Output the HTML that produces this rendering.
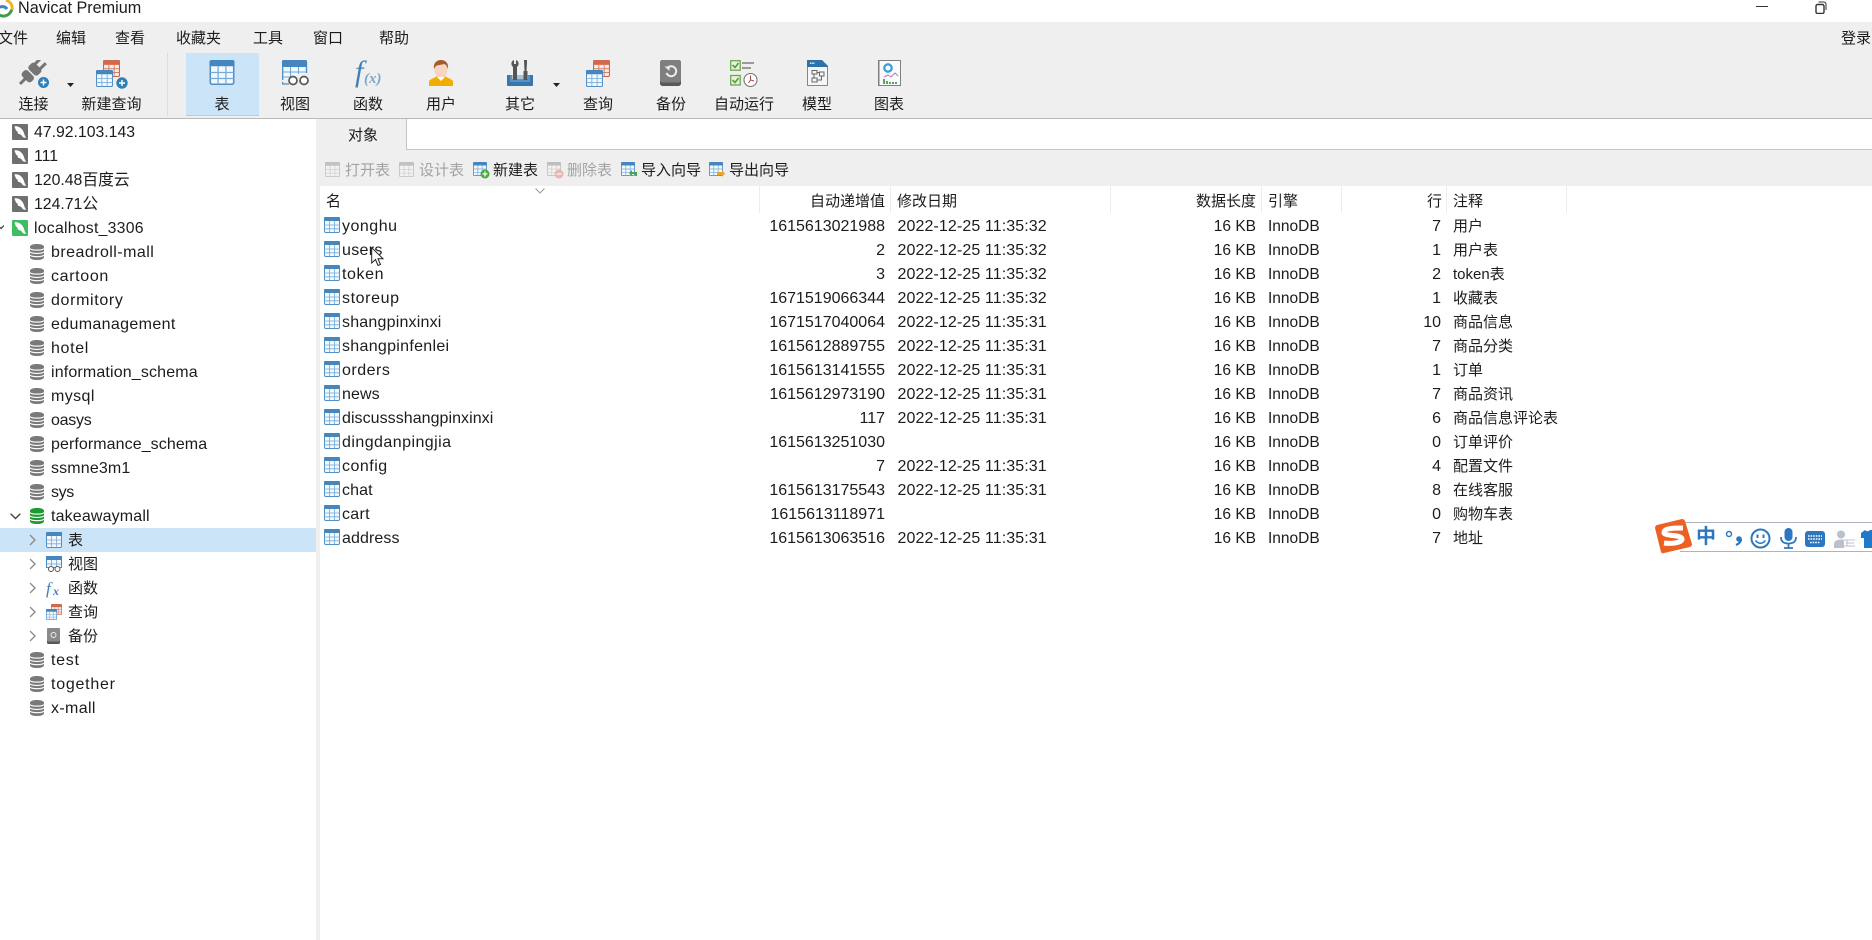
<!DOCTYPE html>
<html lang="zh"><head><meta charset="utf-8"><title>Navicat Premium</title>
<style>
html,body{margin:0;padding:0;background:#fff}
body{width:1872px;height:940px;position:relative;overflow:hidden;font-family:"Liberation Sans","Noto Sans CJK SC",sans-serif;color:#1c1c1c;font-size:15px}
.a{position:absolute;white-space:nowrap}
.l{position:absolute;white-space:nowrap;top:93px;height:24px;line-height:24px;transform:translateX(-50%);font-size:15px}
.m{position:absolute;top:27px;line-height:24px;font-size:15px;white-space:nowrap}
.i{position:absolute}
.s{position:absolute;top:159px;line-height:24px;font-size:15px;white-space:nowrap}
.d{color:#a3a3a3}
.h{position:absolute;top:190px;line-height:24px;font-size:15px;white-space:nowrap}
.sep{position:absolute;top:186px;height:27px;width:1px;background:#ececec}
#tree{position:absolute;left:0;top:120px;width:316px}
#tree div{height:24px;line-height:24px;position:relative;white-space:nowrap;font-size:16px}
#tree svg{position:absolute}
#tree span{color:#1c1c1c;top:1px}
#tree .sv span{position:absolute;left:34px;font-size:15.8px}
#tree .sv svg{left:12px;top:4px}
#tree .db span{position:absolute;left:51px;letter-spacing:.15px}
#tree .db svg{left:30px;top:4px}
#tree .su span{position:absolute;left:68px;font-size:15px}
#tree .su svg.ic{left:46px;top:4px}
#tree .su svg.ch{left:29px;top:6px}
#tree .sel{background:#cce4f8}
#rows{position:absolute;left:320px;top:214px;width:1300px}
.r{height:24px;line-height:24px;position:relative;white-space:nowrap;font-size:16px}
.r svg{position:absolute;left:4px;top:3px}
.r span{position:absolute;top:1px}
.n{left:22px;letter-spacing:.1px}
.u{left:405px;width:160px;text-align:right}
.t{left:577.5px;letter-spacing:.1px}
.z{left:836px;width:100px;text-align:right;font-size:15.5px}
.e{left:948px;font-size:15.5px}
.w{left:1021px;width:100px;text-align:right}
.c{left:1133px;font-size:15px}
</style></head><body>
<svg width="0" height="0" style="position:absolute">
<defs>
<symbol id="tbl" viewBox="0 0 16 16"><rect x=".5" y=".5" width="15" height="15" rx="1.2" fill="#f2f8fd" stroke="#4f90c8"/><rect x="0" y="0" width="16" height="4" rx="1.2" fill="#4586bf"/><path d="M5.5 4V15.5M10.5 4V15.5M.5 8H15.5M.5 11.8H15.5" stroke="#74abda" stroke-width=".8" fill="none"/></symbol>
<symbol id="sv" viewBox="0 0 16 16"><rect width="16" height="16" rx="1" fill="currentColor"/><path d="M2.5 2.5C5 1.8 8 3 10 5.3 11.6 7.2 12.2 9.8 12.7 11.3L14.2 14 10.9 13.2C10 11.2 8.2 10 6 9.6L5.4 7.6 3.9 6.4Z" fill="#fff"/></symbol>
<symbol id="dbi" viewBox="0 0 14 16"><path d="M0 3C0 1 3 0 7 0S14 1 14 3V13C14 15 11 16 7 16S0 15 0 13Z" fill="currentColor"/><path d="M0 4.6C2 6.6 12 6.6 14 4.6M0 7.9C2 9.9 12 9.9 14 7.9M0 11.2C2 13.2 12 13.2 14 11.2" stroke="#fff" stroke-width="1.1" fill="none"/></symbol>
<symbol id="rd" viewBox="0 0 16 16"><rect x=".5" y=".5" width="15" height="15" rx="1.2" fill="#f8ece8" stroke="#c9634a"/><rect width="16" height="4.6" rx="1.2" fill="#cf6a50"/><path d="M5.5 4.5V15.5M10.5 4.5V15.5M.5 8.2H15.5M.5 11.8H15.5" stroke="#d47e66" stroke-width=".9" fill="none"/></symbol>
</defs></svg>

<!-- title bar -->
<svg class="i" style="left:0;top:0" width="14" height="18" viewBox="0 0 14 18"><path d="M-2 14C3 18 10 16 12 9" stroke="#3f9d4a" stroke-width="3" fill="none"/><path d="M6 0C11 2 13 6 12 10" stroke="#f0b429" stroke-width="3" fill="none"/><path d="M-2 8C1 6 5 6 7 9" stroke="#3f80c8" stroke-width="3" fill="none"/></svg>
<div class="a" style="left:18px;top:-3px;line-height:22px;font-size:16.2px">Navicat Premium</div>
<div class="a" style="left:1756px;top:6px;width:12px;height:1px;background:#333"></div>
<svg class="i" style="left:1815px;top:1px" width="12" height="13" viewBox="0 0 12 13"><rect x="1" y="3.5" width="8" height="9" rx="1.5" fill="none" stroke="#333" stroke-width="1.4"/><path d="M3.5 1H8.5C10 1 11 2 11 3.5V9" fill="none" stroke="#333"/></svg>

<!-- menu+toolbar bg -->
<div class="a" style="left:0;top:22px;width:1872px;height:96px;background:#efefef"></div>
<div class="a" style="left:0;top:118px;width:1872px;height:1px;background:#b9b9b9"></div>
<div class="m" style="left:-2px">文件</div><div class="m" style="left:56px">编辑</div><div class="m" style="left:115px">查看</div><div class="m" style="left:176px">收藏夹</div><div class="m" style="left:253px">工具</div><div class="m" style="left:313px">窗口</div><div class="m" style="left:379px">帮助</div><div class="m" style="left:1841px">登录</div>

<div class="a" style="left:167px;top:53px;width:1px;height:63px;background:#dcdcdc"></div>
<div class="a" style="left:186px;top:53px;width:73px;height:63px;background:#cce4f8;border-bottom:1px solid #b5d0e6;box-sizing:border-box"></div>

<!-- toolbar icons -->
<svg class="i" style="left:19px;top:60px" width="32" height="30" viewBox="0 0 32 30"><g transform="translate(1 24) rotate(-45)" fill="#757575"><rect x="0" y="-1.5" width="8" height="3"/><rect x="7" y="-6.5" width="8" height="13" rx="3"/><rect x="16.5" y="-6.5" width="9" height="13" rx="3"/><rect x="25" y="-5" width="8" height="3"/><rect x="25" y="2" width="8" height="3"/></g><circle cx="24.5" cy="22.5" r="5.5" fill="#2f7fb9"/><path d="M21.5 22.5H27.5M24.5 19.5V25.5" stroke="#fff" stroke-width="1.5"/></svg>
<svg class="i" style="left:67px;top:83px" width="7" height="4"><path d="M0 0H7L3.5 4Z" fill="#222"/></svg>
<svg class="i" style="left:103px;top:60px" width="17" height="17"><use href="#rd"/></svg>
<svg class="i" style="left:96px;top:70px" width="17" height="17"><use href="#tbl"/></svg>
<svg class="i" style="left:116px;top:77px" width="12" height="12"><circle cx="6" cy="6" r="5.7" fill="#2f7fb9"/><path d="M3 6H9M6 3V9" stroke="#fff" stroke-width="1.4"/></svg>
<svg class="i" style="left:209px;top:60px" width="26" height="25"><use href="#tbl"/></svg>
<svg class="i" style="left:282px;top:60px" width="28" height="26" viewBox="0 0 28 26"><path d="M.7 20V2.5Q.7.7 2.5.7H23Q24.5.7 24.5 2.5V13M.7 22V24H7" fill="#f2f8fd" stroke="#4a8cc4" stroke-width="1.3"/><rect width="25" height="7" rx="1.5" fill="#4586bf"/><path d="M8.5 7V18M16.5 7V14M1 12H24M1 17H8" stroke="#6aa5d8"/><circle cx="11" cy="20.5" r="4" fill="#fff" stroke="#555" stroke-width="1.7"/><circle cx="22" cy="20.5" r="4" fill="#fff" stroke="#555" stroke-width="1.7"/></svg>
<svg class="i" style="left:352px;top:56px" width="34" height="34" viewBox="0 0 34 34"><text x="3" y="25" font-family="Liberation Serif,serif" font-style="italic" font-size="30" fill="#3f80ba">f</text><text x="12" y="27" font-family="Liberation Serif,serif" font-style="italic" font-size="15" font-weight="bold" fill="#7aa7cf">(x)</text></svg>
<svg class="i" style="left:429px;top:60px" width="24" height="26" viewBox="0 0 24 26"><path d="M0 26V21C3 18 6 18 8 16H16C18 18 21 18 24 21V26Z" fill="#f2ae00"/><ellipse cx="12" cy="9.5" rx="6.5" ry="8.5" fill="#f7d5c0"/><path d="M5 9C4 2 9 0 12 0S20 2 19 9C18 6 17 4.5 15 4 12 5 8 5 7 6 6 7 5.5 8 5 9Z" fill="#a65a2e"/><path d="M8 17L12 21 16 17Z" fill="#fff"/></svg>
<svg class="i" style="left:507px;top:60px" width="26" height="26" viewBox="0 0 26 26"><path d="M0 15H5L5 19H21V15H26V25Q26 26 25 26H1Q0 26 0 25Z" fill="#3777ae"/><path d="M3 15V22H23V15" fill="#6fa6d4" opacity=".6"/><path d="M7 0V4H9V0C12 1 12.5 5 10 7V20H6V7C3.5 5 4 1 7 0Z" fill="#555"/><path d="M17 0H20V3L19.5 11H20.5V20H16.5V11H17.5Z" fill="#555"/></svg>
<svg class="i" style="left:553px;top:83px" width="7" height="4"><path d="M0 0H7L3.5 4Z" fill="#222"/></svg>
<svg class="i" style="left:593px;top:60px" width="17" height="17"><use href="#rd"/></svg>
<svg class="i" style="left:586px;top:70px" width="17" height="17"><use href="#tbl"/></svg>
<svg class="i" style="left:660px;top:60px" width="21" height="26" viewBox="0 0 21 26"><rect width="21" height="26" rx="2.5" fill="#595959"/><rect width="21" height="22.5" rx="2.5" fill="#7f7f7f"/><path d="M7 8.5A5 5 0 1 1 6.5 13" fill="none" stroke="#eee" stroke-width="2"/><path d="M4.5 6.5H9.5V11Z" fill="#eee"/></svg>
<svg class="i" style="left:730px;top:60px" width="28" height="27" viewBox="0 0 28 27"><rect x=".7" y=".7" width="9.5" height="9.5" fill="#e8f3df" stroke="#6aa84f" stroke-width="1.3"/><path d="M2.5 5L5 7.5 8.5 3" stroke="#5c9e3a" stroke-width="1.7" fill="none"/><rect x=".7" y="15.5" width="9.5" height="9.5" fill="#e8f3df" stroke="#6aa84f" stroke-width="1.3"/><path d="M2.5 20L5 22.5 8.5 18" stroke="#5c9e3a" stroke-width="1.7" fill="none"/><path d="M12 3H24M12 8H21" stroke="#9a9a9a" stroke-width="2"/><circle cx="20.5" cy="20" r="6.5" fill="#fff" stroke="#777" stroke-width="1.1"/><path d="M20.5 15.5V20L24 21M20.5 20L18.5 23" stroke="#a04a4a" fill="none"/></svg>
<svg class="i" style="left:807px;top:60px" width="21" height="26" viewBox="0 0 21 26"><path d="M.5 6H20.5V25.5H.5Z" fill="#f4f6f8" stroke="#6f8ba5"/><path d="M0 0H15L21 6V7H0Z" fill="#3071a8"/><path d="M3 3.2H8" stroke="#fff" stroke-width="1.4" stroke-dasharray="1.5 .8"/><path d="M5 10.5H10V14H5ZM12.5 12H17V16H12.5ZM5 18H10V22H5ZM10 12.5H12.5M7 14V18M14.5 16V20H10" fill="none" stroke="#666"/></svg>
<svg class="i" style="left:878px;top:60px" width="23" height="26" viewBox="0 0 23 26"><rect x=".5" y=".5" width="22" height="25" fill="#fbfbfb" stroke="#808080"/><path d="M1.5 1V25" stroke="#bbb"/><circle cx="10" cy="8" r="3.7" fill="none" stroke="#3aa0d8" stroke-width="2.3"/><path d="M6 17L10 15 13 17 17 13 20 16" fill="none" stroke="#b678c8"/><path d="M6 24V19M9 24V21M12 24V22M15 24V22M18 24V22" stroke="#3f9d4a" stroke-width="1.8"/></svg>

<div class="l" style="left:33.5px">连接</div><div class="l" style="left:111.5px">新建查询</div><div class="l" style="left:222px">表</div><div class="l" style="left:295px">视图</div><div class="l" style="left:368px">函数</div><div class="l" style="left:441px">用户</div><div class="l" style="left:520px">其它</div><div class="l" style="left:598px">查询</div><div class="l" style="left:671px">备份</div><div class="l" style="left:744px">自动运行</div><div class="l" style="left:817px">模型</div><div class="l" style="left:889px">图表</div>

<!-- tree -->
<div id="tree">
<div class="sv" style="color:#6f6f6f"><svg width="16" height="16"><use href="#sv"/></svg><span>47.92.103.143</span></div>
<div class="sv" style="color:#6f6f6f"><svg width="16" height="16"><use href="#sv"/></svg><span>111</span></div>
<div class="sv" style="color:#6f6f6f"><svg width="16" height="16"><use href="#sv"/></svg><span>120.48百度云</span></div>
<div class="sv" style="color:#6f6f6f"><svg width="16" height="16"><use href="#sv"/></svg><span>124.71公</span></div>
<div class="sv" style="color:#3cbf62"><svg style="left:-2px;top:9px" width="6" height="5"><path d="M0 .5L3 3.5 6 .5" fill="none" stroke="#444" stroke-width="1.3"/></svg><svg width="16" height="16"><use href="#sv"/></svg><span style="letter-spacing:.25px">localhost_3306</span></div>
<div class="db" style="color:#7a7a7a"><svg width="14" height="16"><use href="#dbi"/></svg><span style="letter-spacing:.45px">breadroll-mall</span></div>
<div class="db" style="color:#7a7a7a"><svg width="14" height="16"><use href="#dbi"/></svg><span style="letter-spacing:.65px">cartoon</span></div>
<div class="db" style="color:#7a7a7a"><svg width="14" height="16"><use href="#dbi"/></svg><span style="letter-spacing:.65px">dormitory</span></div>
<div class="db" style="color:#7a7a7a"><svg width="14" height="16"><use href="#dbi"/></svg><span style="letter-spacing:.35px">edumanagement</span></div>
<div class="db" style="color:#7a7a7a"><svg width="14" height="16"><use href="#dbi"/></svg><span style="letter-spacing:.65px">hotel</span></div>
<div class="db" style="color:#7a7a7a"><svg width="14" height="16"><use href="#dbi"/></svg><span>information_schema</span></div>
<div class="db" style="color:#7a7a7a"><svg width="14" height="16"><use href="#dbi"/></svg><span style="letter-spacing:.4px">mysql</span></div>
<div class="db" style="color:#7a7a7a"><svg width="14" height="16"><use href="#dbi"/></svg><span style="letter-spacing:-.25px">oasys</span></div>
<div class="db" style="color:#7a7a7a"><svg width="14" height="16"><use href="#dbi"/></svg><span style="letter-spacing:.08px">performance_schema</span></div>
<div class="db" style="color:#7a7a7a"><svg width="14" height="16"><use href="#dbi"/></svg><span>ssmne3m1</span></div>
<div class="db" style="color:#7a7a7a"><svg width="14" height="16"><use href="#dbi"/></svg><span style="letter-spacing:-.4px">sys</span></div>
<div class="db" style="color:#1f9a2e"><svg style="left:10px;top:9px" width="11" height="7"><path d="M.7.7L5.5 5.5 10.3.7" fill="none" stroke="#444" stroke-width="1.4"/></svg><svg width="14" height="16"><use href="#dbi"/></svg><span>takeawaymall</span></div>
<div class="su sel"><svg class="ch" width="7" height="12"><path d="M1 1L6 6 1 11" fill="none" stroke="#8a8a8a" stroke-width="1.3"/></svg><svg class="ic" width="16" height="16"><use href="#tbl"/></svg><span>表</span></div>
<div class="su"><svg class="ch" width="7" height="12"><path d="M1 1L6 6 1 11" fill="none" stroke="#8a8a8a" stroke-width="1.3"/></svg><svg class="ic" width="16" height="16" viewBox="0 0 16 16"><rect x=".5" y=".5" width="15" height="11" fill="#f2f8fd" stroke="#4a8cc4"/><rect width="16" height="4" fill="#4586bf"/><path d="M5.5 4V11M10.5 4V11M1 8H15" stroke="#6aa5d8" stroke-width=".8"/><circle cx="5" cy="13" r="2.5" fill="#fff" stroke="#555"/><circle cx="11.5" cy="13" r="2.5" fill="#fff" stroke="#555"/></svg><span>视图</span></div>
<div class="su"><svg class="ch" width="7" height="12"><path d="M1 1L6 6 1 11" fill="none" stroke="#8a8a8a" stroke-width="1.3"/></svg><svg class="ic" width="17" height="18" viewBox="0 0 17 18"><text x="0" y="14" font-family="Liberation Serif,serif" font-style="italic" font-size="17" fill="#3f80ba">f</text><text x="7" y="15" font-family="Liberation Serif,serif" font-style="italic" font-weight="bold" font-size="12" fill="#3f80ba">x</text></svg><span>函数</span></div>
<div class="su"><svg class="ch" width="7" height="12"><path d="M1 1L6 6 1 11" fill="none" stroke="#8a8a8a" stroke-width="1.3"/></svg><svg class="ic" width="16" height="16" viewBox="0 0 16 16"><svg x="5" y="0" width="11" height="11"><use href="#rd"/></svg><svg x="0" y="5" width="11" height="11"><use href="#tbl"/></svg></svg><span>查询</span></div>
<div class="su"><svg class="ch" width="7" height="12"><path d="M1 1L6 6 1 11" fill="none" stroke="#8a8a8a" stroke-width="1.3"/></svg><svg class="ic" style="left:47px" width="13" height="16" viewBox="0 0 13 16"><rect width="13" height="16" rx="1.5" fill="#595959"/><rect width="13" height="13.5" rx="1.5" fill="#8a8a8a"/><circle cx="6.5" cy="7" r="2.5" fill="none" stroke="#eee"/></svg><span>备份</span></div>
<div class="db" style="color:#7a7a7a"><svg width="14" height="16"><use href="#dbi"/></svg><span style="letter-spacing:.7px">test</span></div>
<div class="db" style="color:#7a7a7a"><svg width="14" height="16"><use href="#dbi"/></svg><span style="letter-spacing:.75px">together</span></div>
<div class="db" style="color:#7a7a7a"><svg width="14" height="16"><use href="#dbi"/></svg><span style="letter-spacing:.35px">x-mall</span></div>
</div>

<!-- strip & tabs -->
<div class="a" style="left:316px;top:119px;width:4px;height:821px;background:#efefef"></div>
<div class="a" style="left:316px;top:119px;width:90px;height:31px;background:#efefef"></div>
<div class="a" style="left:406px;top:119px;width:1px;height:31px;background:#c4c4c4"></div>
<div class="a" style="left:407px;top:149px;width:1465px;height:1px;background:#c4c4c4"></div>
<div class="a" style="left:348px;top:124px;line-height:24px;font-size:15px">对象</div>
<div class="a" style="left:316px;top:150px;width:1556px;height:36px;background:#efefef"></div>

<!-- object toolbar -->
<svg class="i" style="left:325px;top:162px;opacity:.38;filter:grayscale(1)" width="15" height="15"><use href="#tbl"/></svg>
<svg class="i" style="left:399px;top:162px;opacity:.38;filter:grayscale(1)" width="15" height="15"><use href="#tbl"/></svg>
<svg class="i" style="left:473px;top:162px" width="17" height="17" viewBox="0 0 17 17"><svg width="14" height="14"><use href="#tbl"/></svg><circle cx="12" cy="12" r="4.5" fill="#4aa83c"/><path d="M9.5 12H14.5M12 9.5V14.5" stroke="#fff" stroke-width="1.3"/></svg>
<svg class="i" style="left:547px;top:162px;opacity:.42" width="17" height="17" viewBox="0 0 17 17"><svg width="14" height="14" style="filter:grayscale(1)"><use href="#tbl"/></svg><circle cx="12" cy="12" r="4.5" fill="#d9705a"/><path d="M9.5 12H14.5" stroke="#fff" stroke-width="1.3"/></svg>
<svg class="i" style="left:621px;top:162px" width="17" height="17" viewBox="0 0 17 17"><svg width="14" height="14"><use href="#tbl"/></svg><path d="M8 11L11 8V10H16V14H14V12H11V14Z" fill="#4aa83c"/></svg>
<svg class="i" style="left:709px;top:162px" width="17" height="17" viewBox="0 0 17 17"><svg width="14" height="14"><use href="#tbl"/></svg><path d="M8 10H13V8L16 11.5 13 15V13H8Z" fill="#eea520"/></svg>
<div class="s d" style="left:345px">打开表</div><div class="s d" style="left:419px">设计表</div><div class="s" style="left:493px">新建表</div><div class="s d" style="left:567px">删除表</div><div class="s" style="left:641px">导入向导</div><div class="s" style="left:729px">导出向导</div>

<!-- header -->
<div class="sep" style="left:759px"></div><div class="sep" style="left:890px"></div><div class="sep" style="left:1110px"></div><div class="sep" style="left:1261px"></div><div class="sep" style="left:1341px"></div><div class="sep" style="left:1446px"></div><div class="sep" style="left:1566px"></div>
<svg class="i" style="left:535px;top:188px" width="10" height="6"><path d="M.5.5L5 5 9.5.5" fill="none" stroke="#9a9a9a"/></svg>
<div class="h" style="left:326px">名</div><div class="h" style="left:810px">自动递增值</div><div class="h" style="left:897px">修改日期</div><div class="h" style="left:1196px">数据长度</div><div class="h" style="left:1268px">引擎</div><div class="h" style="left:1427px">行</div><div class="h" style="left:1453px">注释</div>

<!-- table rows -->
<div id="rows">
<div class="r"><svg width="16" height="16"><use href="#tbl"/></svg><span class="n" style="letter-spacing:.5px">yonghu</span><span class="u">1615613021988</span><span class="t">2022-12-25 11:35:32</span><span class="z">16 KB</span><span class="e">InnoDB</span><span class="w">7</span><span class="c">用户</span></div>
<div class="r"><svg width="16" height="16"><use href="#tbl"/></svg><span class="n" style="letter-spacing:.3px">users</span><span class="u">2</span><span class="t">2022-12-25 11:35:32</span><span class="z">16 KB</span><span class="e">InnoDB</span><span class="w">1</span><span class="c">用户表</span></div>
<div class="r"><svg width="16" height="16"><use href="#tbl"/></svg><span class="n" style="letter-spacing:.6px">token</span><span class="u">3</span><span class="t">2022-12-25 11:35:32</span><span class="z">16 KB</span><span class="e">InnoDB</span><span class="w">2</span><span class="c">token表</span></div>
<div class="r"><svg width="16" height="16"><use href="#tbl"/></svg><span class="n" style="letter-spacing:.6px">storeup</span><span class="u">1671519066344</span><span class="t">2022-12-25 11:35:32</span><span class="z">16 KB</span><span class="e">InnoDB</span><span class="w">1</span><span class="c">收藏表</span></div>
<div class="r"><svg width="16" height="16"><use href="#tbl"/></svg><span class="n" style="letter-spacing:.2px">shangpinxinxi</span><span class="u">1671517040064</span><span class="t">2022-12-25 11:35:31</span><span class="z">16 KB</span><span class="e">InnoDB</span><span class="w">10</span><span class="c">商品信息</span></div>
<div class="r"><svg width="16" height="16"><use href="#tbl"/></svg><span class="n" style="letter-spacing:.3px">shangpinfenlei</span><span class="u">1615612889755</span><span class="t">2022-12-25 11:35:31</span><span class="z">16 KB</span><span class="e">InnoDB</span><span class="w">7</span><span class="c">商品分类</span></div>
<div class="r"><svg width="16" height="16"><use href="#tbl"/></svg><span class="n" style="letter-spacing:.5px">orders</span><span class="u">1615613141555</span><span class="t">2022-12-25 11:35:31</span><span class="z">16 KB</span><span class="e">InnoDB</span><span class="w">1</span><span class="c">订单</span></div>
<div class="r"><svg width="16" height="16"><use href="#tbl"/></svg><span class="n">news</span><span class="u">1615612973190</span><span class="t">2022-12-25 11:35:31</span><span class="z">16 KB</span><span class="e">InnoDB</span><span class="w">7</span><span class="c">商品资讯</span></div>
<div class="r"><svg width="16" height="16"><use href="#tbl"/></svg><span class="n" style="letter-spacing:.05px">discussshangpinxinxi</span><span class="u">117</span><span class="t">2022-12-25 11:35:31</span><span class="z">16 KB</span><span class="e">InnoDB</span><span class="w">6</span><span class="c">商品信息评论表</span></div>
<div class="r"><svg width="16" height="16"><use href="#tbl"/></svg><span class="n" style="letter-spacing:.45px">dingdanpingjia</span><span class="u">1615613251030</span><span class="z">16 KB</span><span class="e">InnoDB</span><span class="w">0</span><span class="c">订单评价</span></div>
<div class="r"><svg width="16" height="16"><use href="#tbl"/></svg><span class="n" style="letter-spacing:.5px">config</span><span class="u">7</span><span class="t">2022-12-25 11:35:31</span><span class="z">16 KB</span><span class="e">InnoDB</span><span class="w">4</span><span class="c">配置文件</span></div>
<div class="r"><svg width="16" height="16"><use href="#tbl"/></svg><span class="n">chat</span><span class="u">1615613175543</span><span class="t">2022-12-25 11:35:31</span><span class="z">16 KB</span><span class="e">InnoDB</span><span class="w">8</span><span class="c">在线客服</span></div>
<div class="r"><svg width="16" height="16"><use href="#tbl"/></svg><span class="n" style="letter-spacing:.3px">cart</span><span class="u">1615613118971</span><span class="z">16 KB</span><span class="e">InnoDB</span><span class="w">0</span><span class="c">购物车表</span></div>
<div class="r"><svg width="16" height="16"><use href="#tbl"/></svg><span class="n">address</span><span class="u">1615613063516</span><span class="t">2022-12-25 11:35:31</span><span class="z">16 KB</span><span class="e">InnoDB</span><span class="w">7</span><span class="c">地址</span></div>
</div>

<!-- cursor -->
<svg class="i" style="left:371px;top:247px" width="13" height="20" viewBox="0 0 13 20"><path d="M.7.7V16L4.5 12.5 7 18.5 9.5 17.5 7 11.7H12Z" fill="#fff" stroke="#222"/></svg>

<!-- sogou bar -->
<div class="a" style="left:1680px;top:522px;width:192px;height:30px;background:#fff;border-top:1px solid #aeb3c0;border-bottom:1px solid #aeb3c0;box-sizing:border-box"></div>
<svg class="i" style="left:1655px;top:519px" width="37" height="35" viewBox="0 0 37 35"><path d="M2 6L27 0Q29 0 30 2L37 25Q37 27 35 28L9 34Q7 35 6 33L0 9Q0 7 2 6Z" fill="#ee5f23"/><path d="M28 9C20 9 10 9 9 13 8 18 27 15 27 20 27 24 16 25 9 24" fill="none" stroke="#fff" stroke-width="5"/></svg>
<div class="a" style="left:1696px;top:525px;line-height:24px;font-size:20px;font-weight:bold;color:#2b78c0">中</div>
<svg class="i" style="left:1725px;top:528px" width="18" height="20" viewBox="0 0 18 20"><circle cx="4" cy="6" r="2.5" fill="none" stroke="#2b78c0" stroke-width="1.5"/><circle cx="14" cy="11" r="2.8" fill="#2b78c0"/><path d="M16 11Q16 15 11 17" stroke="#2b78c0" stroke-width="2.2" fill="none"/></svg>
<svg class="i" style="left:1750px;top:528px" width="21" height="21" viewBox="0 0 21 21"><circle cx="10.5" cy="10.5" r="9" fill="#fff" stroke="#2b78c0" stroke-width="2"/><path d="M7.5 6.5V10M13.5 6.5V10" stroke="#2b78c0" stroke-width="2"/><path d="M5.5 12.5Q10.5 18 15.5 12.5" stroke="#2b78c0" stroke-width="1.6" fill="none"/></svg>
<svg class="i" style="left:1780px;top:528px" width="17" height="21" viewBox="0 0 17 21"><rect x="4.5" y="0" width="8" height="13" rx="4" fill="#2b78c0"/><path d="M1 9C1 14 4 15.5 8.5 15.5S16 14 16 9M8.5 15.5V19.5M4 20H13" fill="none" stroke="#2b78c0" stroke-width="1.8"/></svg>
<svg class="i" style="left:1805px;top:531px" width="20" height="16" viewBox="0 0 20 16"><rect width="20" height="16" rx="3" fill="#2b78c0"/><path d="M3 5H17M3 8H17M5 11.5H15" stroke="#fff" stroke-width="1.6" stroke-dasharray="1.6 1"/></svg>
<svg class="i" style="left:1834px;top:530px" width="22" height="18" viewBox="0 0 22 18"><circle cx="7" cy="4.5" r="4" fill="#bcc0cc"/><path d="M0 18V14C0 11 3 9.5 7 9.5S9 10 10 11V18Z" fill="#bcc0cc"/><path d="M10 10H21M12 13H20M10 16H21M13 10V16" stroke="#bcc0cc"/></svg>
<svg class="i" style="left:1861px;top:530px" width="13" height="18" viewBox="0 0 13 18"><path d="M4 0L0 3V8H3V18H13V0H9Q6.5 2.5 4 0Z" fill="#1f78c8"/></svg>
</body></html>
